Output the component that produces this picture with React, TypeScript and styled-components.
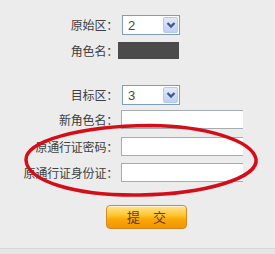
import React from 'react';
import styled, { createGlobalStyle } from 'styled-components';

const GlobalStyle = createGlobalStyle`
  html, body {
    margin: 0;
    padding: 0;
    background: #ececec;
  }
`;

const Page = styled.div`
  position: relative;
  width: 275px;
  height: 254px;
  overflow: hidden;
  background: #ececec;
  font-family: 'Noto Sans CJK SC', 'Noto Sans', sans-serif;
  display: flex;
  flex-direction: column;
  padding-top: 15px;
  box-sizing: border-box;
`;

const Row = styled.div<{ $mt: number; $h: number }>`
  display: flex;
  align-items: center;
  height: ${({ $h }) => $h}px;
  margin-top: ${({ $mt }) => $mt}px;
`;

const Label = styled.div`
  width: 118px;
  flex: none;
  text-align: right;
  font-size: 12px;
  line-height: 14px;
  letter-spacing: -0.2px;
  color: #404040;
  white-space: nowrap;
`;

const Select = styled.div`
  margin-left: 4px;
  width: 58px;
  height: 20px;
  box-sizing: border-box;
  border: 1px solid #7f9db9;
  background: #fff;
  display: flex;
  align-items: center;
`;

const SelectValue = styled.span`
  padding-left: 5px;
  font-family: 'Liberation Sans', Arial, sans-serif;
  font-size: 13px;
  color: #4a4a4a;
`;

const ArrowButton = styled.span`
  margin-left: auto;
  margin-right: 1px;
  width: 15px;
  height: 16px;
  box-sizing: border-box;
  border: 1px solid #b7c9ef;
  border-radius: 2px;
  background: linear-gradient(#e2ebfc, #bccff6);
  display: flex;
  align-items: center;
  justify-content: center;
`;

const Masked = styled.div`
  width: 61px;
  height: 17px;
  background: #4b4b4b;
`;

const TextInput = styled.div`
  margin-left: 3px;
  width: 122px;
  height: 19px;
  box-sizing: border-box;
  border: 1px solid #a5acb2;
  border-right: none;
  background: #fff;
`;

const SubmitButton = styled.button`
  margin: 23px 0 0 106px;
  width: 81px;
  height: 24px;
  padding: 0;
  border: 1px solid #d08a24;
  border-radius: 4px;
  background: linear-gradient(#ffe493 0%, #ffc733 40%, #f9a90a 60%, #f29300 100%);
  box-shadow: inset 0 1px 0 rgba(255, 255, 255, 0.6);
  color: #733a00;
  font-family: 'Noto Sans CJK SC', sans-serif;
  font-size: 13px;
  line-height: 22px;
  cursor: pointer;
`;

const Footer = styled.div`
  margin-top: 19px;
  height: 5px;
  border-top: 1px solid #d6d6d6;
  background: #e6e6e6;
`;

const Circle = styled.svg`
  position: absolute;
  left: 0;
  top: 0;
  pointer-events: none;
`;

const Chevron = () => (
  <svg width="10" height="8" viewBox="0 0 10 8">
    <polyline points="1.5,2 5,5.5 8.5,2" fill="none" stroke="#44598a" strokeWidth="2.3" />
  </svg>
);

const Dropdown: React.FC<{ value: string }> = ({ value }) => (
  <Select>
    <SelectValue>{value}</SelectValue>
    <ArrowButton>
      <Chevron />
    </ArrowButton>
  </Select>
);

const App: React.FC = () => (
  <Page>
    <GlobalStyle />
    <Row $mt={0} $h={20}>
      <Label>原始区：</Label>
      <Dropdown value="2" />
    </Row>
    <Row $mt={7} $h={17}>
      <Label>角色名：</Label>
      <Masked />
    </Row>
    <Row $mt={26} $h={20}>
      <Label>目标区：</Label>
      <Dropdown value="3" />
    </Row>
    <Row $mt={5} $h={19}>
      <Label>新角色名：</Label>
      <TextInput />
    </Row>
    <Row $mt={8} $h={19}>
      <Label>原通行证密码：</Label>
      <TextInput />
    </Row>
    <Row $mt={7} $h={19}>
      <Label>原通行证身份证：</Label>
      <TextInput />
    </Row>
    <SubmitButton>提　交</SubmitButton>
    <Footer />
    <Circle width="275" height="254" viewBox="0 0 275 254">
      <path
        d="M150 125.5 C 205 126, 252 140, 256 159 C 259 178, 205 194, 140 195 C 75 196, 27 181, 26 160 C 25 141, 80 126, 150 125.5 Z"
        fill="none"
        stroke="#d50d18"
        strokeWidth="3.5"
      />
    </Circle>
  </Page>
);

export default App;
